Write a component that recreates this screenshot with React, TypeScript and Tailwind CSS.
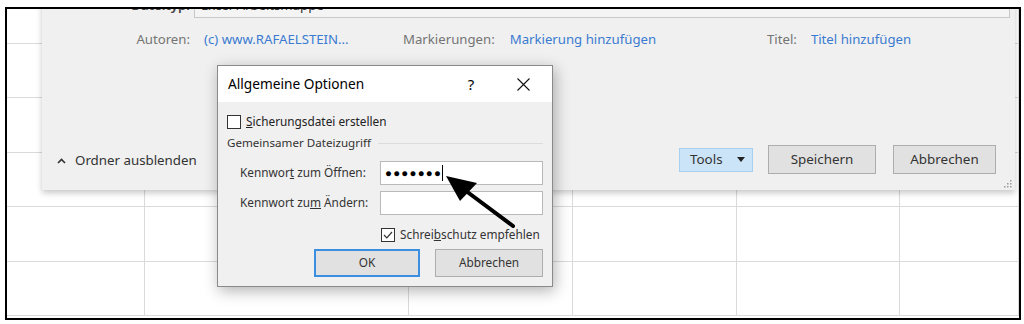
import React from 'react';

const font = { fontFamily: '"Noto Sans", "Open Sans", Arial, sans-serif' };

// spreadsheet rows and columns behind the dialogs
const rows = [35, 54, 55, 54, 55, 54];
const cols = 6;

const Grid: React.FC = () => (
  <div className="grid grid-cols-[138px_264px_164px_164px_163px_1fr] grid-rows-[35px_54px_55px_54px_55px_54px] w-full h-full">
    {rows.map((_, r) =>
      Array.from({ length: cols }).map((__, c) => (
        <div key={`${r}-${c}`} className="border-r border-b border-[#dadada] bg-white" />
      ))
    )}
  </div>
);

const SavePanel: React.FC = () => (
  <div className="absolute left-[35px] top-[-20px] w-[973px] h-[201px] bg-[#f0f0f0] shadow-[0_3px_6px_rgba(0,0,0,0.22)] flex flex-col pt-[5px] pb-[16px] text-[13.2px] whitespace-nowrap">
    {/* Dateityp (cut off above) */}
    <div className="flex items-center h-[24px]">
      <div className="w-[148px] text-right text-[#444] font-semibold">Dateityp:</div>
      <div className="ml-[4px] w-[816px] h-[24px] border border-[#c8c8c8] bg-[#f4f4f4] flex items-center px-[6px] text-[#333]">
        Excel-Arbeitsmappe
      </div>
    </div>

    <div className="flex items-center h-[20px] mt-[12px]">
      <div className="w-[361px] flex items-center">
        <div className="w-[148px] text-right text-[#747474]">Autoren:</div>
        <div className="ml-[14px] text-[#3a7bd0]">(c) www.RAFAELSTEIN...</div>
      </div>
      <div className="w-[364px] flex items-center">
        <div className="text-[#747474]">Markierungen:</div>
        <div className="ml-[15px] text-[#3a7bd0]">Markierung hinzufügen</div>
      </div>
      <div className="flex items-center">
        <div className="text-[#747474]">Titel:</div>
        <div className="ml-[14px] text-[#3a7bd0]">Titel hinzufügen</div>
      </div>
    </div>

    <div className="mt-auto flex items-center pr-[19px]">
      <div className="flex items-center pl-[15px] text-[13.3px] text-[#333] mt-[2px]">
        <svg width="9" height="6" viewBox="0 0 9 6" className="mr-[9px]">
          <path d="M1 5 L4.5 1.5 L8 5" fill="none" stroke="#333" strokeWidth="1.6" />
        </svg>
        Ordner ausblenden
      </div>
      <div className="ml-auto flex items-center text-[13.4px]">
        <div className="w-[74px] h-[24px] bg-[#cce4f7] border border-[#a6cff0] flex items-center pl-[10px] text-[#333]">
          Tools
          <svg width="8" height="5" viewBox="0 0 8 5" className="ml-auto mr-[7px]">
            <path d="M0 0 H8 L4 5 Z" fill="#222" />
          </svg>
        </div>
        <div className="ml-[15px] w-[108px] h-[29px] bg-[#e1e1e1] border border-[#adadad] flex items-center justify-center text-[#333]">
          Speichern
        </div>
        <div className="ml-[17px] w-[103px] h-[29px] bg-[#e1e1e1] border border-[#adadad] flex items-center justify-center text-[#333]">
          Abbrechen
        </div>
      </div>
    </div>

    {/* resize grip */}
    <svg width="8" height="8" viewBox="0 0 8 8" className="absolute right-[3px] bottom-[2px]">
      <rect x="6" y="0" width="1.5" height="1.5" fill="#9a9a9a" />
      <rect x="3" y="3" width="1.5" height="1.5" fill="#9a9a9a" />
      <rect x="6" y="3" width="1.5" height="1.5" fill="#9a9a9a" />
      <rect x="0" y="6" width="1.5" height="1.5" fill="#9a9a9a" />
      <rect x="3" y="6" width="1.5" height="1.5" fill="#9a9a9a" />
      <rect x="6" y="6" width="1.5" height="1.5" fill="#9a9a9a" />
    </svg>
  </div>
);

const Checkbox: React.FC<{ checked?: boolean }> = ({ checked }) => (
  <div className="w-[14px] h-[14px] border border-[#333] bg-white flex items-center justify-center shrink-0">
    {checked && (
      <svg width="10" height="8" viewBox="0 0 10 8">
        <path d="M1 4 L3.8 6.8 L9 1" fill="none" stroke="#333" strokeWidth="1.2" />
      </svg>
    )}
  </div>
);

const OptionsDialog: React.FC = () => (
  <div className="absolute left-[210px] top-[56px] w-[336px] h-[222px] border border-[#8a8a8a] bg-[#f0f0f0] shadow-[2px_4px_14px_rgba(0,0,0,0.3)] flex flex-col text-[11.8px] text-[#222] whitespace-nowrap">
    <div className="h-[36px] bg-white flex items-center pl-[10px] shrink-0">
      <div className="text-[13.7px] text-black">Allgemeine Optionen</div>
      <div className="ml-auto w-[54px] text-center text-[15px] text-black mr-[19px]">?</div>
      <svg width="13" height="13" viewBox="0 0 13 13" className="mr-[22px]">
        <path d="M0.5 0.5 L12.5 12.5 M12.5 0.5 L0.5 12.5" stroke="#111" strokeWidth="1.1" />
      </svg>
    </div>

    <div className="flex flex-col px-[9px]">
      <div className="mt-[13px] h-[14px] flex items-center gap-[5px]">
        <Checkbox />
        <span><span className="underline">S</span>icherungsdatei erstellen</span>
      </div>

      <div className="mt-[6px] h-[16px] flex items-center text-[#333]">
        <span className="text-[11.6px]">Gemeinsamer Dateizugriff</span>
        <div className="flex-1 h-px bg-[#dcdcdc] ml-[7px]" />
      </div>

      <div className="mt-[10px] h-[24px] flex items-center">
        <div className="w-[154px] pl-[13px] text-[#333]">
          Kennwor<span className="underline">t</span> zum Öffnen:
        </div>
        <div className="w-[164px] h-[24px] border border-[#b9b9b9] bg-white flex items-center pl-[4px]">
          <span className="text-[11.5px] tracking-[1.2px] text-black leading-none">●●●●●●●</span>
          <div className="w-px h-[16px] bg-black" />
        </div>
      </div>

      <div className="mt-[6px] h-[24px] flex items-center">
        <div className="w-[154px] pl-[13px] text-[#333]">
          Kennwort zu<span className="underline">m</span> Ändern:
        </div>
        <div className="w-[164px] h-[24px] border border-[#b9b9b9] bg-white" />
      </div>

      <div className="mt-[13px] h-[14px] flex items-center gap-[5px] pl-[154px]">
        <Checkbox checked />
        <span className="text-[#333]">Schrei<span className="underline">b</span>schutz empfehlen</span>
      </div>

      <div className="mt-[7px] h-[28px] flex items-center pl-[87px]">
        <div className="w-[107px] h-[28px] bg-[#e1e1e1] border-2 border-[#3c8ee0] flex items-center justify-center text-[#333]">
          OK
        </div>
        <div className="ml-[15px] w-[109px] h-[28px] bg-[#e1e1e1] border border-[#adadad] flex items-center justify-center text-[#333]">
          Abbrechen
        </div>
      </div>
    </div>
  </div>
);

export default function App() {
  return (
    <div className="relative w-[1024px] h-[324px] bg-white overflow-hidden" style={font}>
      <div className="absolute left-[5px] top-[7px] w-[1016px] h-[313px] border-2 border-black overflow-hidden">
        <div className="relative w-full h-full">
          <Grid />
          <SavePanel />
          <OptionsDialog />
        </div>
      </div>

      {/* annotation arrow */}
      <svg width="1024" height="324" className="absolute left-0 top-0 pointer-events-none">
        <line x1="462" y1="188" x2="513" y2="226" stroke="#000" strokeWidth="4" strokeLinecap="round" />
        <path d="M446 176 L477 183 L460 201 Z" fill="#000" />
      </svg>
    </div>
  );
}
